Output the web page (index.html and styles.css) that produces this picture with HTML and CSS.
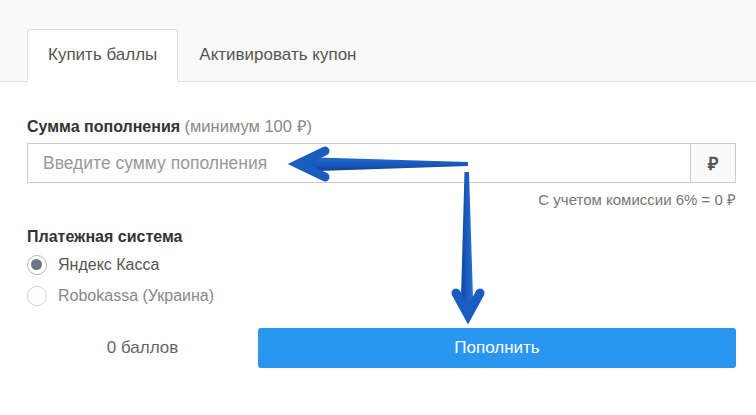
FILE: index.html
```html
<!DOCTYPE html>
<html lang="ru">
<head>
    <meta charset="UTF-8">
    <title>Пополнение баланса</title>
    <link rel="stylesheet" href="styles.css">
</head>
<body>
    <div class="tabs">
        <a class="tab active" href="#">Купить баллы</a>
        <a class="tab" href="#">Активировать купон</a>
    </div>

    <form class="pay-form">
        <label class="field-label" for="amount">Сумма пополнения <span class="hint">(минимум 100 ₽)</span></label>
        <div class="input-group">
            <input type="text" id="amount" placeholder="Введите сумму пополнения">
            <span class="addon">₽</span>
        </div>
        <div class="commission">С учетом комиссии 6% = 0 ₽</div>

        <div class="field-label system-label">Платежная система</div>
        <label class="radio checked"><span class="dot"></span>Яндекс Касса</label>
        <label class="radio muted"><span class="dot"></span>Robokassa (Украина)</label>

        <div class="submit-row">
            <div class="points">0 баллов</div>
            <button type="button" class="button">Пополнить</button>
        </div>
    </form>

    <!-- стрелки поверх формы -->
    <svg class="arrows" width="756" height="415" viewBox="0 0 756 415">
        <defs>
            <linearGradient id="shaftH" x1="0" y1="0" x2="0" y2="1">
                <stop offset="0" stop-color="#2368cc"/>
                <stop offset="0.6" stop-color="#1656b8"/>
                <stop offset="1" stop-color="#0c3f91"/>
            </linearGradient>
            <linearGradient id="shaftV" x1="0" y1="0" x2="1" y2="0">
                <stop offset="0" stop-color="#0f479f"/>
                <stop offset="0.5" stop-color="#1a5cc0"/>
                <stop offset="1" stop-color="#2a6fd0"/>
            </linearGradient>
        </defs>
        <polygon points="300,164 318,157.5 468,162 468,166 318,171" fill="url(#shaftH)"/>
        <polyline points="325,151 298,164 325,177" fill="none" stroke="#1a5cbf" stroke-width="9" stroke-linecap="round" stroke-linejoin="miter"/>
        <polygon points="467,317 461,298 464.5,172 469,172 473,298" fill="url(#shaftV)"/>
        <polyline points="456,293 468,315 480,293" fill="none" stroke="#1a5cbf" stroke-width="9" stroke-linecap="round" stroke-linejoin="miter"/>
    </svg>
</body>
</html>
```

FILE: styles.css
```css
body {
    font-family: 'Liberation Sans', Arial, sans-serif;
    margin: 0;
    background: #fff;
    color: #555;
    position: relative;
    width: 756px;
    height: 415px;
    overflow: hidden;
}

/* Вкладки */
.tabs {
    display: flex;
    padding: 29px 27px 0;
    background: #fafafa;
    border-bottom: 1px solid #ddd;
}

.tab {
    display: block;
    padding: 15px 20px 16px;
    margin-bottom: -1px;
    font-size: 17px;
    line-height: 20px;
    color: #555;
    text-decoration: none;
    border: 1px solid transparent;
    border-radius: 3px 3px 0 0;
}
.tab.active {
    background: #fff;
    border-color: #ddd;
    border-bottom-color: #fff;
}

/* Форма */
.pay-form {
    padding: 34px 20px 0 27px;
}

.field-label {
    display: block;
    font-size: 16px;
    line-height: 20px;
    font-weight: bold;
    color: #333;
}
.hint {
    font-weight: normal;
    font-size: 16.5px;
    color: #888;
}

.input-group {
    display: flex;
    height: 40px;
    margin-top: 6px;
    border: 1px solid #ccc;
    box-sizing: border-box;
}
.input-group input {
    flex: 1;
    border: none;
    outline: none;
    padding: 0 15px;
    font-family: inherit;
    font-size: 17.5px;
    color: #333;
    background: #fff;
}
.input-group input::placeholder {
    color: #999;
}
.addon {
    width: 44px;
    display: flex;
    align-items: center;
    justify-content: center;
    border-left: 1px solid #ccc;
    background: #fafafa;
    font-size: 18px;
    font-weight: bold;
    color: #555;
}

.commission {
    margin-top: 8px;
    text-align: right;
    font-size: 15px;
    line-height: 18px;
    color: #777;
}

.system-label {
    margin-top: 18px;
    margin-bottom: 2px;
}

.radio {
    display: flex;
    align-items: center;
    height: 31px;
    font-size: 16px;
    color: #555;
}
.radio .dot {
    width: 20px;
    height: 20px;
    box-sizing: border-box;
    border: 1px solid #c8c8c8;
    border-radius: 50%;
    margin-right: 11px;
    background: #fff;
    position: relative;
}
.radio.checked .dot {
    border: 1.5px solid #b4b4b4;
}
.radio.checked .dot::after {
    content: '';
    position: absolute;
    left: 3px;
    top: 3px;
    width: 11px;
    height: 11px;
    border-radius: 50%;
    background: #6b7586;
}
.radio.muted {
    color: #888;
}
.radio.muted .dot {
    border-color: #d4d4d4;
}

/* Кнопка */
.submit-row {
    display: grid;
    grid-template-columns: 231px 1fr;
    align-items: center;
    margin-top: 17px;
}
.points {
    text-align: center;
    font-size: 17px;
    color: #666;
}
.button {
    height: 40px;
    border: none;
    border-radius: 3px;
    background: #2b96f0;
    color: #fff;
    font-family: inherit;
    font-size: 17px;
    cursor: pointer;
}

/* Стрелки */
.arrows {
    position: absolute;
    left: 0;
    top: 0;
    pointer-events: none;
}
```
